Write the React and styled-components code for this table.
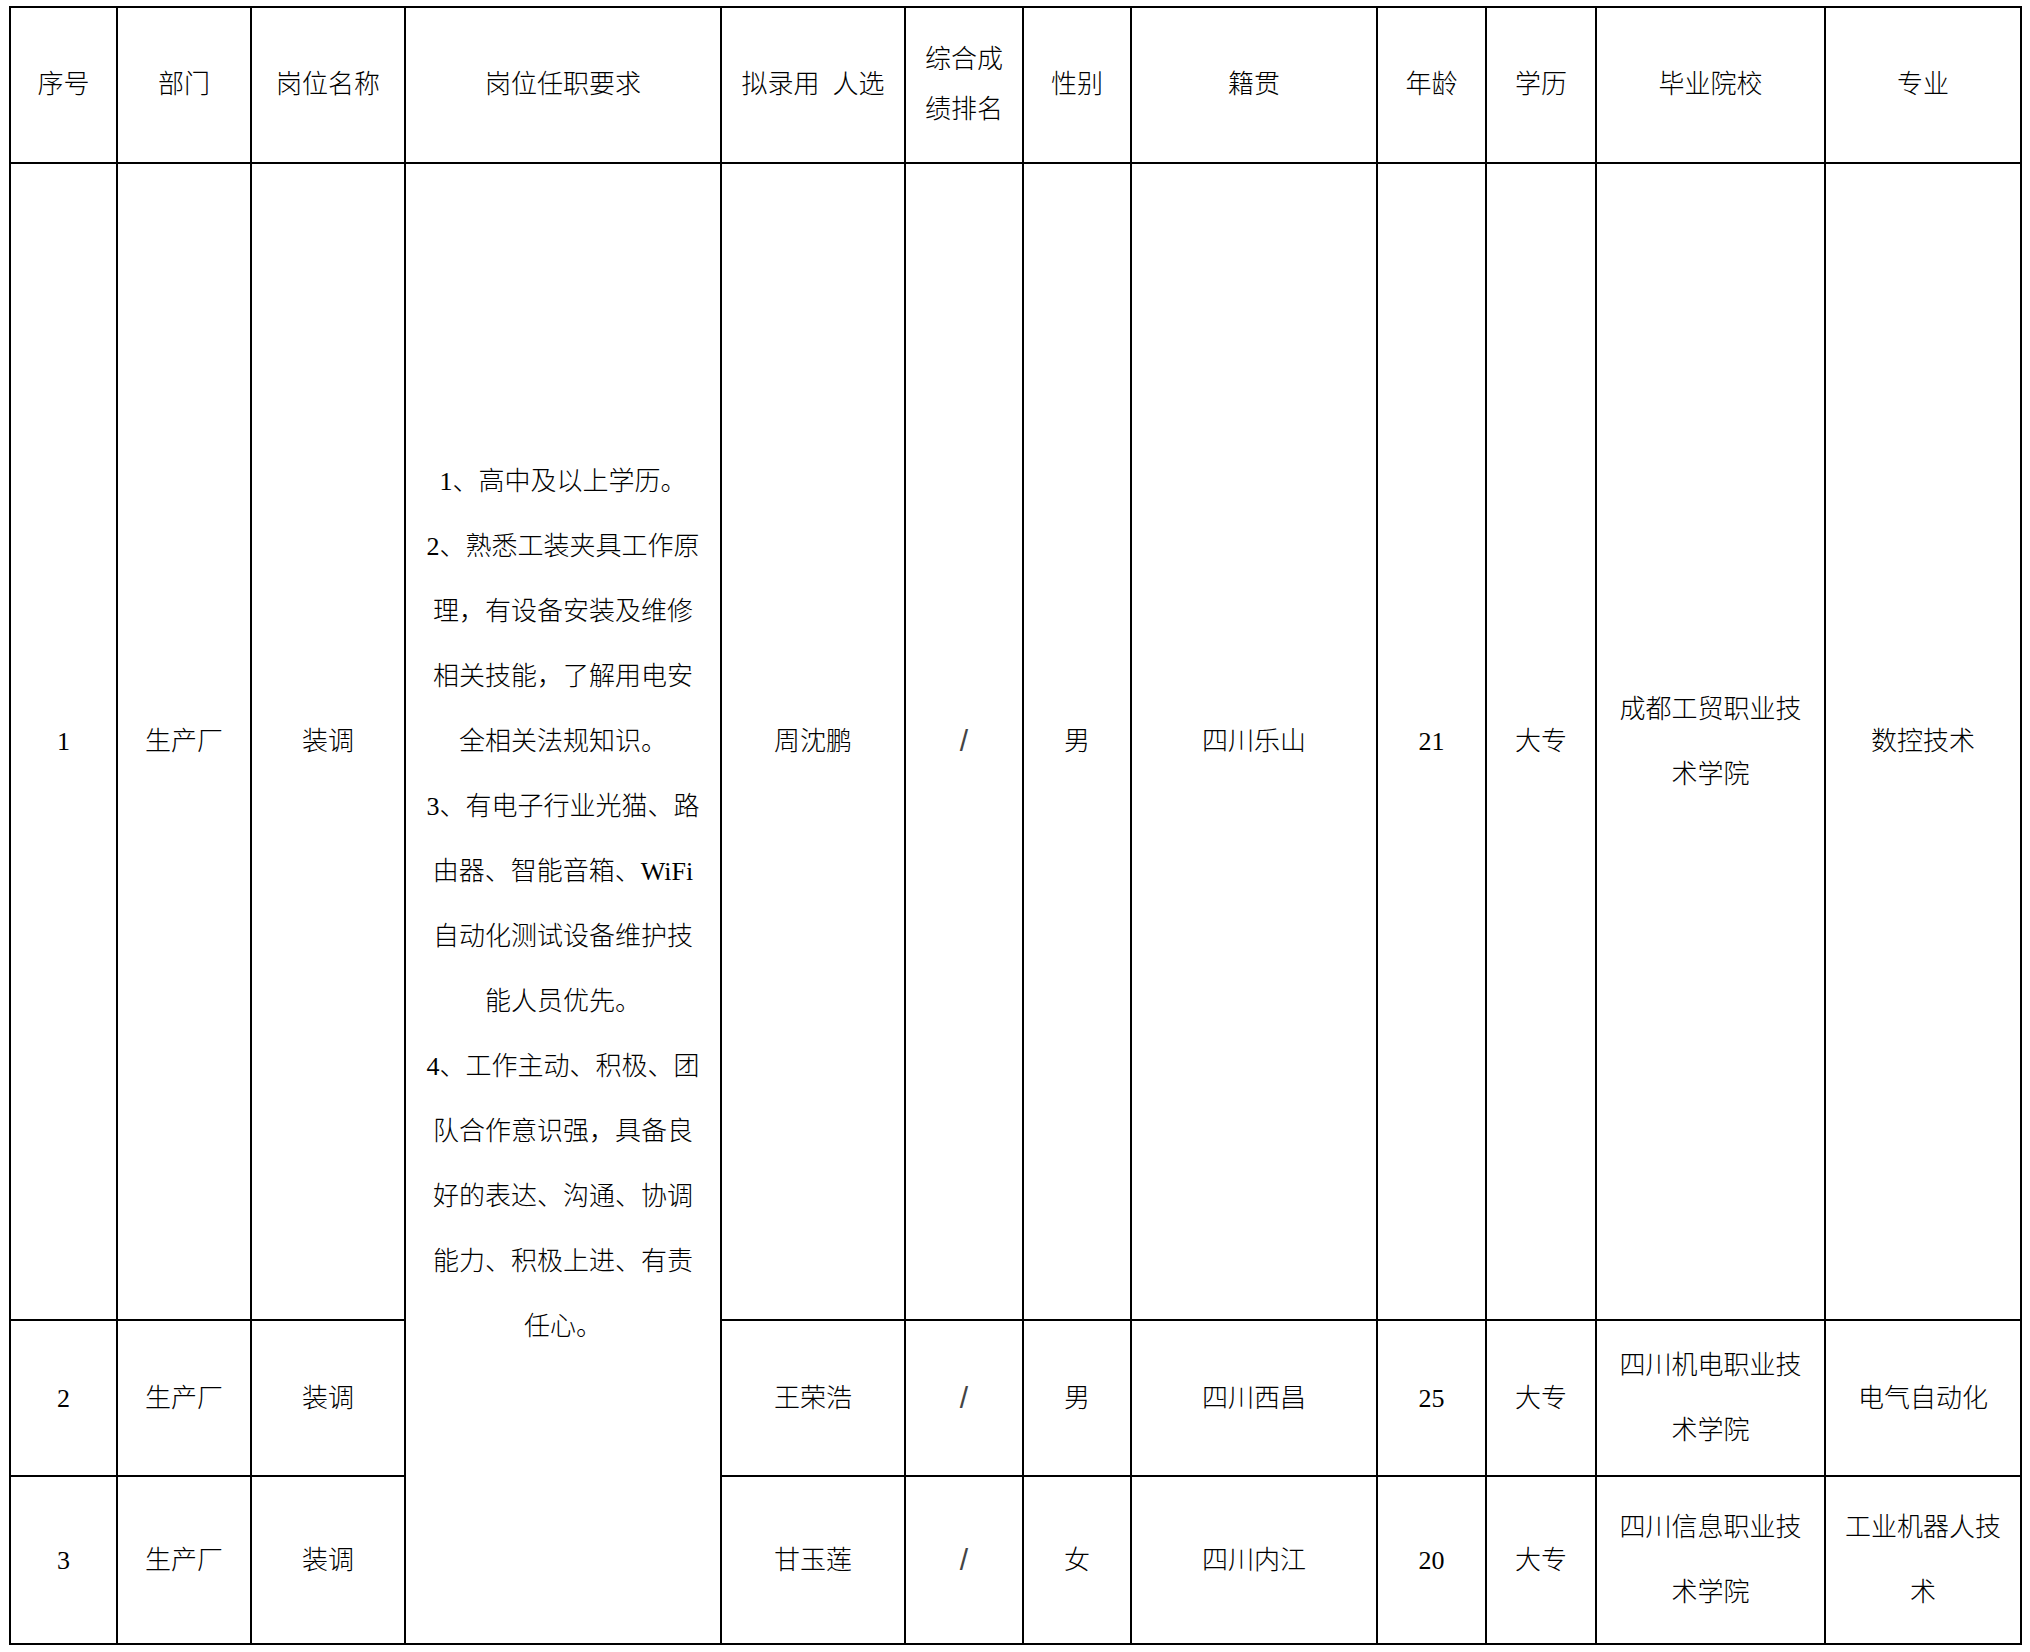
import React from "react";
import styled, { createGlobalStyle } from "styled-components";

const GlobalStyle = createGlobalStyle`
  html, body { margin: 0; padding: 0; background: #ffffff; }
  body {
    font-family: "Liberation Serif", "Noto Sans CJK SC", serif;
    color: #000000;
  }
`;

const Page = styled.div`
  padding: 6px 0 0 9px;
  width: 2030px;
  height: 1652px;
  box-sizing: border-box;
  background: #ffffff;
`;

const Table = styled.table`
  border-collapse: collapse;
  table-layout: fixed;
  width: 2013px;
  font-family: "Liberation Serif", "Noto Sans CJK SC", serif;
  font-size: 26px;
  font-weight: 300;
  color: #000;
`;

const Row = styled.tr`
  height: ${(p) => p.$h}px;
`;

const HeadCell = styled.th`
  border: 2px solid #000;
  padding: 0;
  text-align: center;
  vertical-align: middle;
  font-weight: 300;
  line-height: 50px;
`;

const Cell = styled.td`
  border: 2px solid #000;
  padding: 0;
  text-align: center;
  vertical-align: middle;
  line-height: 65px;
`;

const Line = styled.span`
  display: block;
  white-space: nowrap;
`;

const Slash = styled.span`
  font-family: "Liberation Sans", sans-serif;
  color: #444;
  font-size: 30px;
  font-weight: 300;
`;

const colWidths = [107, 134, 154, 316, 184, 118, 108, 246, 109, 110, 229, 196];

const headers = [
  ["序号"],
  ["部门"],
  ["岗位名称"],
  ["岗位任职要求"],
  ["拟录用\u2002人选"],
  ["综合成", "绩排名"],
  ["性别"],
  ["籍贯"],
  ["年龄"],
  ["学历"],
  ["毕业院校"],
  ["专业"],
];

const requirements = [
  "1、高中及以上学历。",
  "2、熟悉工装夹具工作原",
  "理，有设备安装及维修",
  "相关技能，了解用电安",
  "全相关法规知识。",
  "3、有电子行业光猫、路",
  "由器、智能音箱、WiFi",
  "自动化测试设备维护技",
  "能人员优先。",
  "4、工作主动、积极、团",
  "队合作意识强，具备良",
  "好的表达、沟通、协调",
  "能力、积极上进、有责",
  "任心。",
];

const rows = [
  {
    h: 1157,
    no: "1",
    name: "周沈鹏",
    sex: "男",
    origin: "四川乐山",
    age: "21",
    school: ["成都工贸职业技", "术学院"],
    major: ["数控技术"],
  },
  {
    h: 156,
    no: "2",
    name: "王荣浩",
    sex: "男",
    origin: "四川西昌",
    age: "25",
    school: ["四川机电职业技", "术学院"],
    major: ["电气自动化"],
  },
  {
    h: 168,
    no: "3",
    name: "甘玉莲",
    sex: "女",
    origin: "四川内江",
    age: "20",
    school: ["四川信息职业技", "术学院"],
    major: ["工业机器人技", "术"],
  },
];

const Lines = ({ items }) => items.map((t, i) => <Line key={i}>{t}</Line>);

export default function App() {
  return (
    <>
      <GlobalStyle />
      <Page>
        <Table>
          <colgroup>
            {colWidths.map((w, i) => (
              <col key={i} style={{ width: w }} />
            ))}
          </colgroup>
          <thead>
            <Row $h={156}>
              {headers.map((h, i) => (
                <HeadCell key={i}>
                  <Lines items={h} />
                </HeadCell>
              ))}
            </Row>
          </thead>
          <tbody>
            {rows.map((r, i) => (
              <Row key={r.no} $h={r.h}>
                <Cell>{r.no}</Cell>
                <Cell>生产厂</Cell>
                <Cell>装调</Cell>
                {i === 0 && (
                  <Cell rowSpan={3}>
                    <Lines items={requirements} />
                  </Cell>
                )}
                <Cell>{r.name}</Cell>
                <Cell>
                  <Slash>/</Slash>
                </Cell>
                <Cell>{r.sex}</Cell>
                <Cell>{r.origin}</Cell>
                <Cell>{r.age}</Cell>
                <Cell>大专</Cell>
                <Cell>
                  <Lines items={r.school} />
                </Cell>
                <Cell>
                  <Lines items={r.major} />
                </Cell>
              </Row>
            ))}
          </tbody>
        </Table>
      </Page>
    </>
  );
}
